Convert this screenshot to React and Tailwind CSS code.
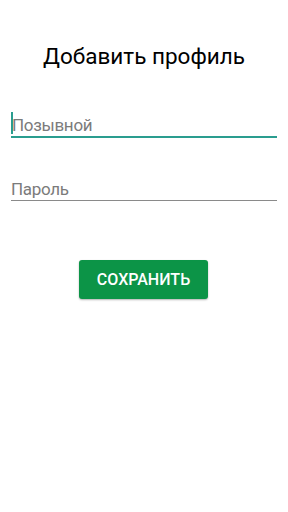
import React from "react";

export default function App() {
  return (
    <div className="min-h-[512px] w-[288px] bg-white font-['Roboto',sans-serif]">
      {/* TITLE */}
      <h1 className="pt-[42px] text-center text-[22.5px] leading-[29px] text-black">
        Добавить профиль
      </h1>

      <div className="mt-[43px] px-[11px]">
        {/* CALLSIGN (focused) */}
        <div className="relative border-b-2 border-[#2a9d8f] text-[17px] leading-[22px] tracking-[-0.3px] text-[#7b7b7b]">
          <span className="absolute left-0 top-[-2px] h-[22px] w-[2px] bg-[#2a9d8f]" />
          <span className="ml-[1px]">Позывной</span>
        </div>

        {/* PASSWORD */}
        <div className="mt-[40px] border-b border-[#8a8a8a] text-[17px] leading-[22px] tracking-[-0.3px] text-[#7b7b7b]">
          Пароль
        </div>
      </div>

      {/* SAVE */}
      <div className="mt-[59px] flex justify-center">
        <button className="ml-[-1px] h-[39px] w-[129px] rounded-[3px] bg-[#0c9447] text-[16px] font-medium text-white shadow-[0_1px_2px_rgba(0,0,0,0.3)]">
          СОХРАНИТЬ
        </button>
      </div>
    </div>
  );
}
